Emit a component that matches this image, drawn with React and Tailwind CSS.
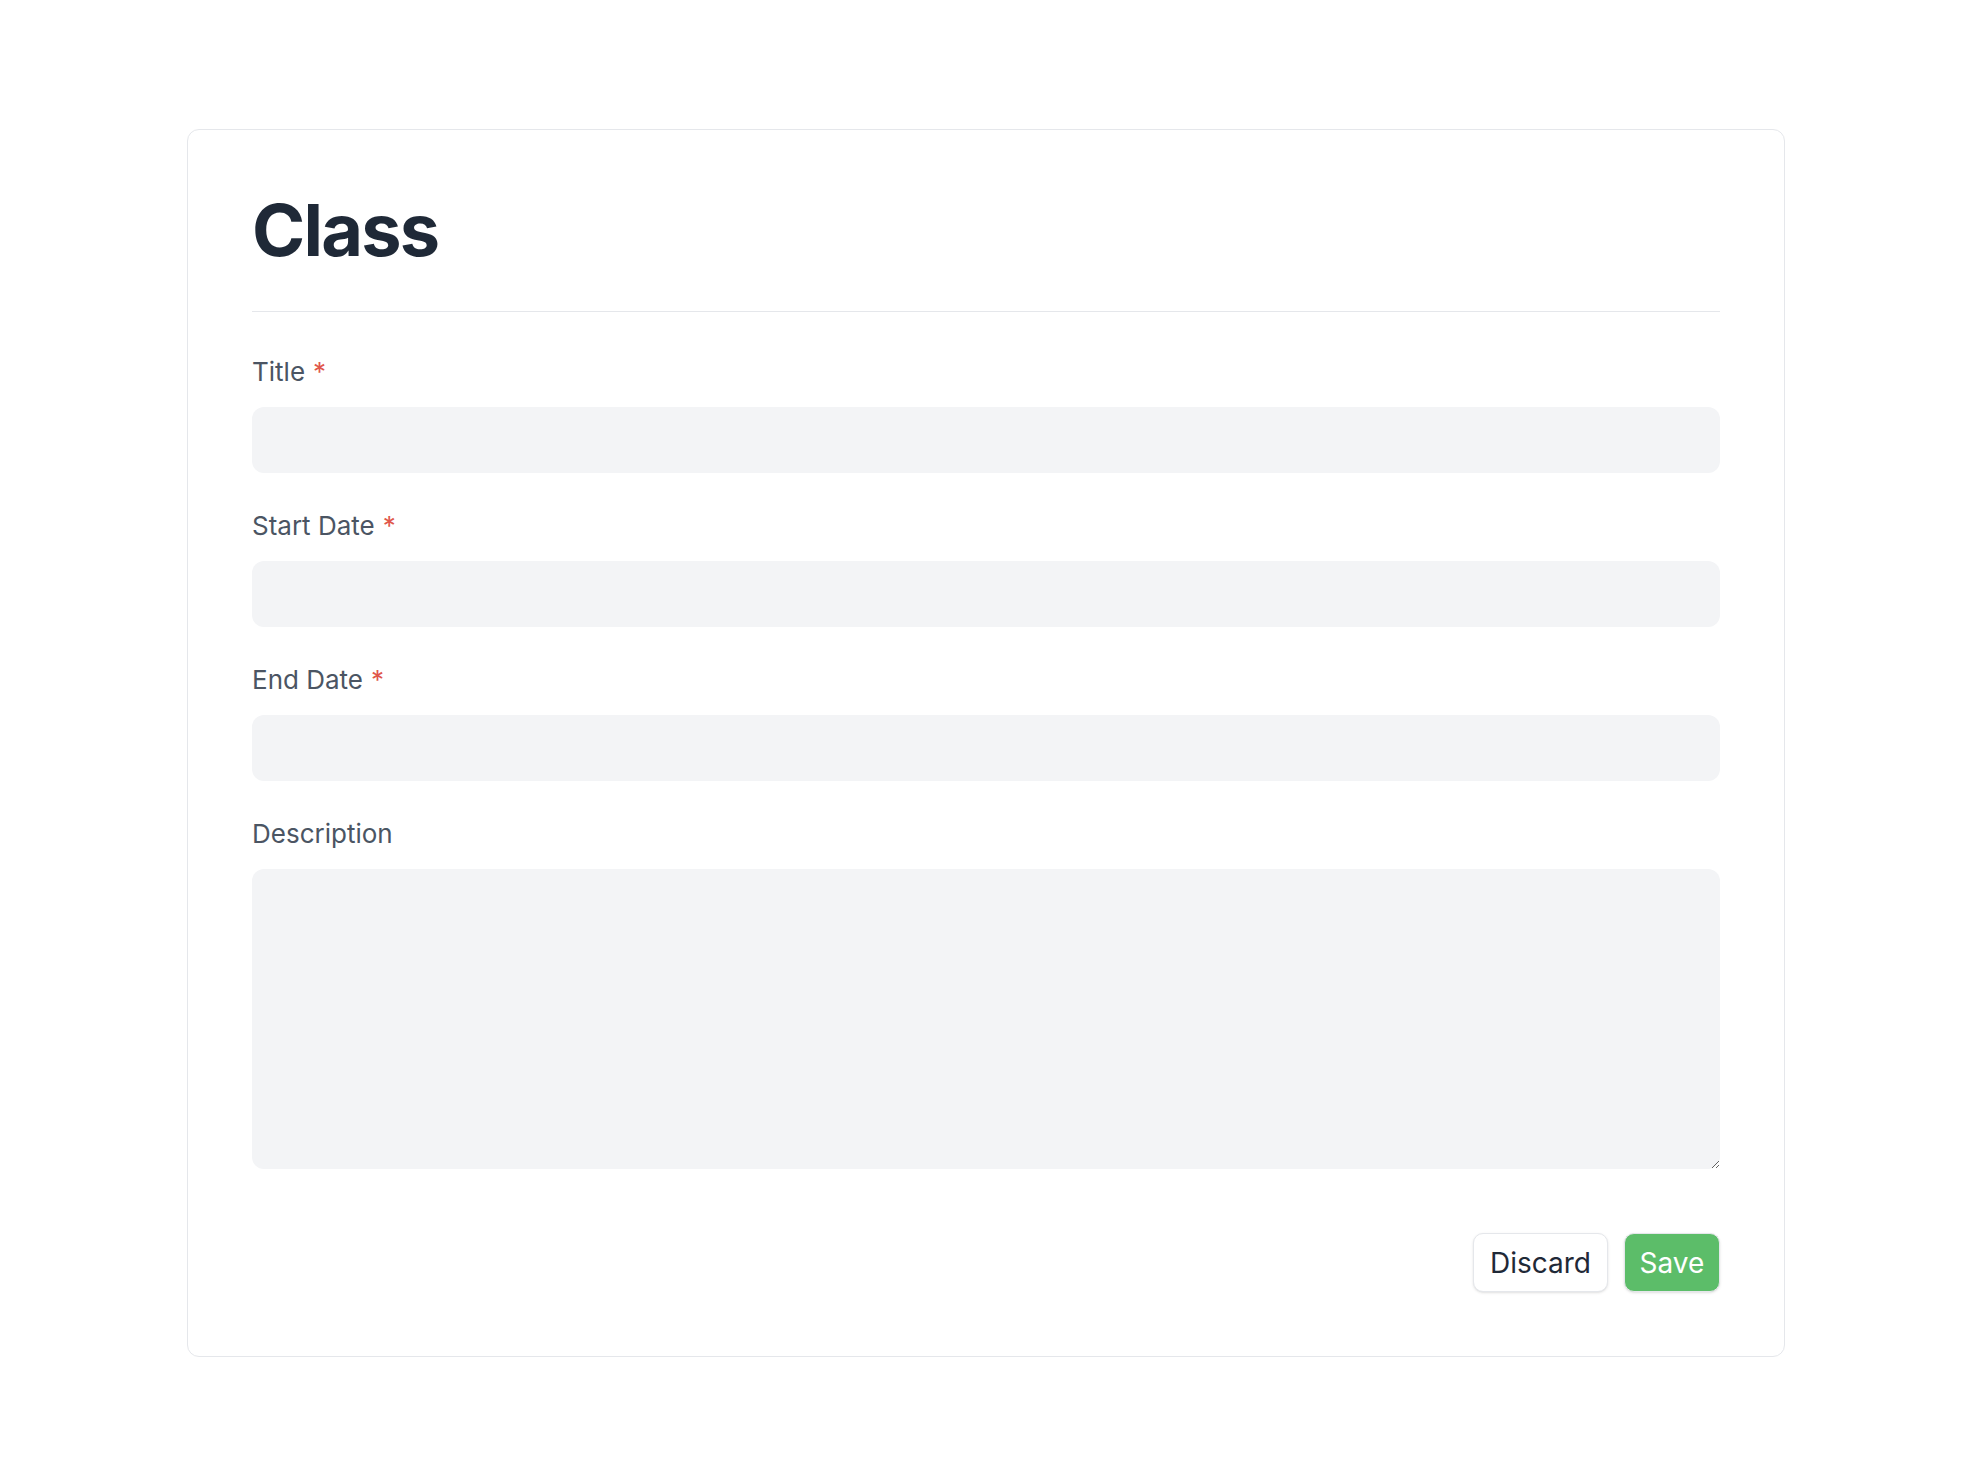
const fields = [
  { label: 'Title', required: true },
  { label: 'Start Date', required: true },
  { label: 'End Date', required: true }
];

const Label = ({ label, required }) => (
  <label className="mb-4 block text-[26px] leading-[39px] text-[#4b5563]">
    {label}
    {required && <span className="ml-2 text-[#e0574b]">*</span>}
  </label>
);

const App = () => {
  return (
    <div className="min-h-screen bg-white pt-[129px] font-['Inter',sans-serif]">
      <div className="ml-[187px] w-[1598px] rounded-xl border border-[#e5e7eb] bg-white p-16">
        <h1 className="text-[72px] font-bold leading-none tracking-tight text-[#1f2937]">Class</h1>
        <div className="mt-[45px] border-t border-[#e5e7eb]" />

        <div className="mt-10 flex flex-col gap-[33px]">
          {fields.map((f) => (
            <div key={f.label}>
              <Label label={f.label} required={f.required} />
              <input className="block h-[66px] w-full rounded-xl bg-[#f3f4f6] px-4 text-[26px] outline-none" />
            </div>
          ))}
          <div>
            <Label label="Description" />
            <textarea className="block h-[300px] w-full resize-y rounded-xl bg-[#f3f4f6] px-4 py-3 text-[26px] outline-none" />
          </div>
        </div>

        <div className="mt-16 flex justify-end gap-4">
          <button className="h-[59px] w-[135px] rounded-[10px] border border-[#e5e7eb] bg-white text-[28px] text-[#1f2937] shadow-sm">
            Discard
          </button>
          <button className="h-[59px] w-[96px] rounded-[10px] border border-[#e5e7eb] bg-[#5cbd69] text-[28px] text-white shadow-sm">
            Save
          </button>
        </div>
      </div>
    </div>
  );
};

export default App;
